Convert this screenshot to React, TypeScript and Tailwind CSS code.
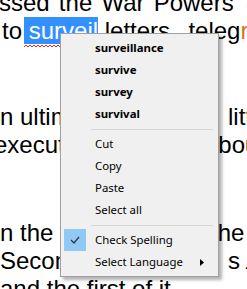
import React from "react";

const item = "h-[22px] flex items-center pl-[32px] text-[11.4px] text-black";
const orange = "text-[#d07a10]";

function Squiggle() {
  let d = "M0 2";
  for (let x = 0; x < 80; x += 4) {
    d += ` L${x + 2} 0 L${x + 4} 2`;
  }
  return (
    <svg className="absolute left-0 bottom-[-4px]" width="80" height="3" viewBox="0 0 80 3">
      <path d={d} fill="none" stroke="#e02020" strokeWidth="1" />
    </svg>
  );
}

export default function App() {
  return (
    <div className="relative w-[247px] h-[289px] overflow-hidden bg-white">
      <div
        className="text-[24px] leading-[28px] text-black whitespace-nowrap"
        style={{ fontFamily: '"Liberation Sans", Arial, sans-serif' }}
      >
        <div className="-mt-[11px] -ml-[1px] [word-spacing:2.5px]">
          ssed the War Powers <span className={orange + " ml-[4px]"}>J</span>
        </div>
        <div className="ml-[2px]">
          to{" "}
          <span className="relative -ml-[5px] pl-[5px] bg-[#3390ff] text-white">
            surveil
            <Squiggle />
          </span>{" "}
          letters, <span className="ml-[5px]">teleg</span>
          <span className={orange}>r</span>am
        </div>
        <div className="h-[58px]" />
        <div className="flex">
          <span className="w-[228px] shrink-0 overflow-hidden">n ultimately the Pres</span>
          <span className="shrink-0">
            lit<span className={orange}>t</span>le
          </span>
        </div>
        <div className="flex -ml-[6px]">
          <span className="w-[211px] shrink-0 overflow-hidden">executive branch</span>
          <span className="shrink-0">about</span>
        </div>
        <div className="h-[60px]" />
        <div className="flex">
          <span className="w-[211px] shrink-0 overflow-hidden">n the world war</span>
          <span className="shrink-0">the</span>
        </div>
        <div className="flex">
          <span className="w-[228px] shrink-0 overflow-hidden">Second World War</span>
          <span className="shrink-0">
            s <i>A</i>
          </span>
        </div>
        <div className="flex">
          <span className="w-[228px] shrink-0 overflow-hidden">and the first of it</span>
        </div>
      </div>

      <div
        className="absolute left-[60px] top-[33px] w-[159px] bg-[#f0f0f0] border border-[#a0a0a0] py-[3px] px-[2px] shadow-[3px_3px_3px_rgba(0,0,0,0.3)]"
        style={{ fontFamily: '"Noto Sans", "Open Sans", sans-serif' }}
      >
        <div className={item + " font-bold"}>surveillance</div>
        <div className={item + " font-bold"}>survive</div>
        <div className={item + " font-bold"}>survey</div>
        <div className={item + " font-bold"}>survival</div>
        <div className="h-[8px] flex items-center pl-[28px] pr-[3px]">
          <div className="h-px w-full bg-[#d7d7d7]" />
        </div>
        <div className={item}>Cut</div>
        <div className={item}>Copy</div>
        <div className={item}>Paste</div>
        <div className={item}>Select all</div>
        <div className="h-[8px] flex items-center pl-[28px] pr-[3px]">
          <div className="h-px w-full bg-[#d7d7d7]" />
        </div>
        <div className={item + " relative"}>
          <div className="absolute left-[1px] top-0 w-[22px] h-[22px] bg-[#90c8f6] flex items-center justify-center">
            <svg width="10" height="8" viewBox="0 0 10 8">
              <path d="M1 4 L4 7 L9 1" fill="none" stroke="#333" strokeWidth="1.2" />
            </svg>
          </div>
          Check Spelling
        </div>
        <div className={item + " relative"}>
          Select Language
          <svg className="absolute left-[137px] top-[8px]" width="4" height="7" viewBox="0 0 4 7">
            <path d="M0 0 L4 3.5 L0 7 Z" fill="#000" />
          </svg>
        </div>
      </div>
    </div>
  );
}
